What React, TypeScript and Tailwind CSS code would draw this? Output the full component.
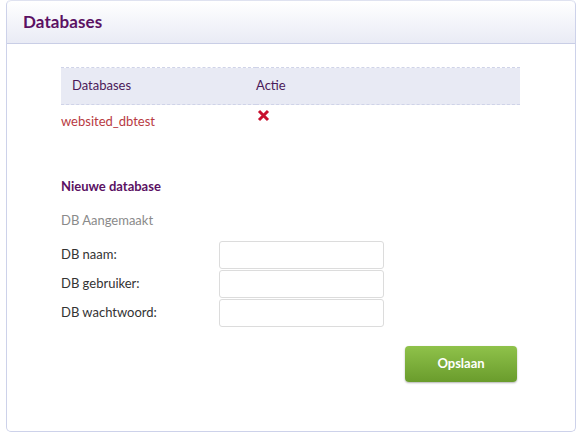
import React from 'react';

const rows = [{ name: 'websited_dbtest' }];

export default function App() {
  return (
    <div className="w-[588px] h-[437px] bg-white pl-[6px] pr-[12px] pb-[5px] font-['Lato','Liberation_Sans',sans-serif]">
      <div className="h-full border border-t-0 border-[#cdd2ea] rounded-[5px] flex flex-col">
        {/* Header */}
        <div className="h-[44px] shrink-0 rounded-t-[5px] border-t border-[#dfe2f0] border-b border-b-[#c9cee6] bg-gradient-to-b from-white to-[#e9ebf5] pl-[16px] flex items-center">
          <h1 className="text-[17px] font-bold text-[#5b1163] tracking-[0.1px]">Databases</h1>
        </div>

        <div className="pl-[54px] pr-[55px] pt-[23px]">
          {/* Table */}
          <table className="w-full border-collapse">
            <thead>
              <tr className="bg-[#e8eaf4] h-[37px] border-y border-dashed border-[#cfd3e8]">
                <th className="text-left font-normal text-[13px] text-[#4b1959] pl-[11px] w-[195px]">Databases</th>
                <th className="text-left font-normal text-[13px] text-[#4b1959]">Actie</th>
              </tr>
            </thead>
            <tbody>
              {rows.map((r) => (
                <tr key={r.name} className="h-[36px]">
                  <td className="text-[13px] text-[#b83a3f] align-top pt-[7px]">{r.name}</td>
                  <td className="align-top pt-[4px] pl-[1px]">
                    <svg width="13" height="13" viewBox="0 0 13 13">
                      <path d="M2 2 L11 11 M11 2 L2 11" stroke="#c8102e" strokeWidth="3" strokeLinecap="butt" />
                    </svg>
                  </td>
                </tr>
              ))}
            </tbody>
          </table>

          {/* New database */}
          <h2 className="mt-[36px] text-[13px] font-bold text-[#5b1163] leading-[18px]">Nieuwe database</h2>
          <p className="mt-[16px] text-[13px] text-[#8a8a8a] leading-[18px]">DB Aangemaakt</p>

          <div className="mt-[12px] flex flex-col gap-[1px]">
            {['DB naam:', 'DB gebruiker:', 'DB wachtwoord:'].map((label) => (
              <div key={label} className="flex items-center h-[28px]">
                <label className="w-[158px] text-[13px] text-[#333]">{label}</label>
                <input type="text" className="w-[165px] h-[28px] border border-[#dcdcdc] rounded-[3px] bg-white outline-none" />
              </div>
            ))}
          </div>

          <div className="flex justify-end mt-[19px] pr-[3px]">
            <button className="w-[112px] h-[36px] rounded-[4px] bg-gradient-to-b from-[#8fc24a] to-[#6a9c2c] text-white font-bold text-[13px] shadow-[0_1px_2px_rgba(0,0,0,0.3)]">
              Opslaan
            </button>
          </div>
        </div>
      </div>
    </div>
  );
}
